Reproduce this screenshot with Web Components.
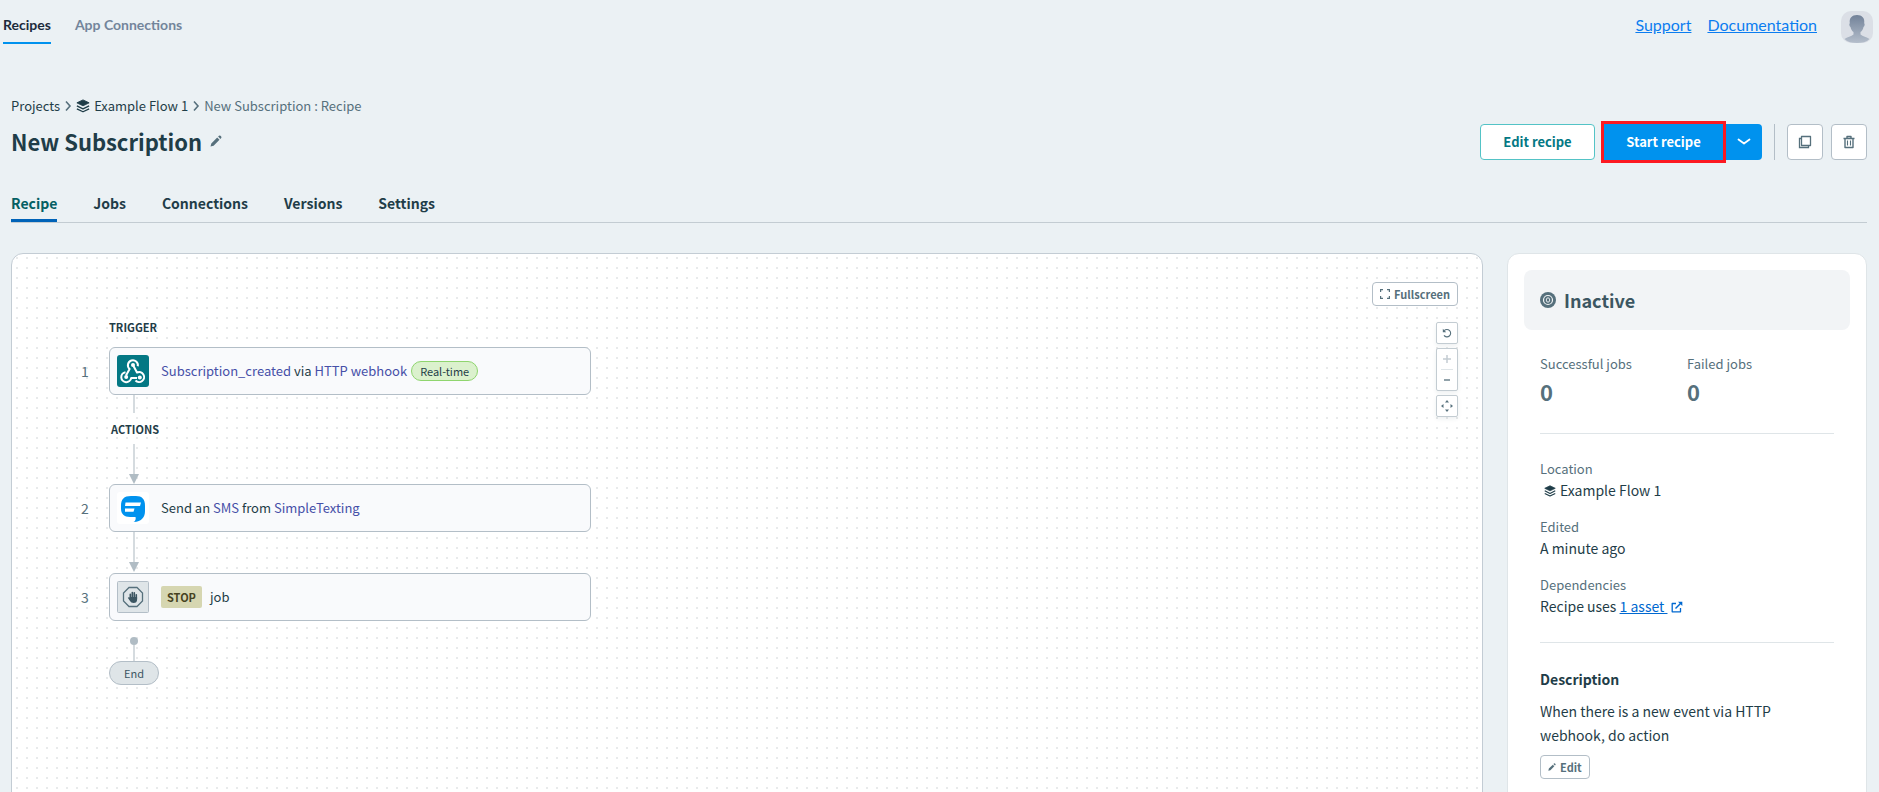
<!DOCTYPE html>
<html lang="en">
<head>
<meta charset="utf-8">
<title>New Subscription</title>
<style>
  html, body { margin: 0; height: 100%; overflow: hidden; }
  body {
    --ink: #1f3d48;
    --muted: #56707c;
    --line: #b3bec7;
    --body-font: "Noto Sans CJK SC", "Open Sans", sans-serif;
    background: #ebf1f4;
    color: var(--ink);
    font: 14px/24px var(--body-font);
  }
</style>
</head>
<body>
<recipe-app></recipe-app>

<script>
(function () {
    'use strict';

    function define(name, html, setup) {
        const template = document.createElement('template');
        template.innerHTML = html;
        customElements.define(name, class extends HTMLElement {
            constructor() {
                super();
                this.attachShadow({ mode: 'open' });
                this.shadowRoot.appendChild(template.content.cloneNode(true));
            }
            connectedCallback() {
                if (setup) setup(this, this.shadowRoot);
            }
        });
    }

    const icons = {
        layers: ['0 0 16 16', '<path d="M8 1 15 4.4 8 7.8 1 4.4Z" fill="currentColor" stroke="currentColor" stroke-linejoin="round"/><path d="m1 7.8 7 3.4 7-3.4M1 11.2l7 3.4 7-3.4" fill="none" stroke="currentColor" stroke-width="1.5" stroke-linejoin="round"/>'],
        chevron: ['0 0 8 12', '<path d="m2 1.500 4 4.500-4 4.500" fill="none" stroke="currentColor" stroke-width="1.600"/>'],
        down: ['0 0 14 8', '<path d="m1.500 1.500 5.500 4 5.500-4" fill="none" stroke="currentColor" stroke-width="1.800" stroke-linecap="round" stroke-linejoin="round"/>'],
        pencil: ['0 0 12 12', '<path d="m.5 11.500.8-3.100L7.200 2.500 9.500 4.800 3.600 10.700ZM8.100 1.600 9 .8Q9.700.2 10.500.8L11.200 1.500Q11.800 2.300 11.200 3L10.400 3.900Z" fill="currentColor"/>'],
        copy: ['0 0 14 14', '<path d="M3.500 1.500h9v9h-9Z" fill="none" stroke="currentColor" stroke-width="1.300" stroke-linejoin="round"/><path d="M3 3.500H1.500v9h9V11" fill="none" stroke="currentColor" stroke-width="1.300"/>'],
        trash: ['0 0 14 14', '<path d="M1.500 3.500h11M5 3V1.500h4V3M3 4v8.500h8V4" fill="none" stroke="currentColor" stroke-width="1.400" stroke-linejoin="round"/><path d="M5.500 5.500v5M8.500 5.500v5" stroke="currentColor" stroke-width="1.100"/>'],
        expand: ['0 0 10 10', '<path d="M.6 3V.6H3M7 .6h2.400V3M9.400 7v2.400H7M3 9.400H.6V7" fill="none" stroke="currentColor" stroke-width="1.200"/>'],
        reset: ['0 0 10 10', '<path d="M2.200 2.700A3.700 3.700 0 1 1 2 7.400" fill="none" stroke="currentColor" stroke-width="1.100"/><path d="M.8.8v3.400h3.400Z" fill="currentColor"/>'],
        plus: ['0 0 10 10', '<path d="M5 1v8M1 5h8" stroke="currentColor" stroke-width="1.500"/>'],
        minus: ['0 0 10 10', '<path d="M2 5h6" stroke="currentColor" stroke-width="1.300"/>'],
        fit: ['0 0 12 12', '<path d="m6 0 2 2.500H4ZM6 12 4 9.500h4ZM0 6l2.500-2v4ZM12 6 9.500 8V4Z" fill="currentColor"/>'],
        external: ['0 0 12 12', '<path d="M5 2.500H1.200v8.300h8.300V7" fill="none" stroke="currentColor" stroke-width="1.300" stroke-linejoin="round"/><path d="m4.500 7.500 5-5" stroke="currentColor" stroke-width="1.400"/><path d="M7 .8h4.300V5Z" fill="currentColor"/>'],
        inactive: ['0 0 16 16', '<circle cx="8" cy="8" r="8" fill="currentColor"/><circle cx="8" cy="8" r="4.500" fill="none" stroke="#f2f4f6" stroke-width="1.200"/><ellipse cx="8" cy="8" rx="1.700" ry="2.200" fill="none" stroke="#f2f4f6" stroke-width=".9"/>'],
        user: ['0 0 32 32', '<defs><linearGradient id="g" x2="0" y2="1"><stop stop-color="#728299"/><stop offset="1" stop-color="#b4becb"/></linearGradient></defs><rect width="32" height="32" rx="10" fill="#dbdfe6"/><path d="M16 4c5 0 8 3 7.200 8.200.8.500.5 3-.7 3.800-.5 2.500-1.500 4-3 5v2.500c2 2 6.500 2.500 9 4.500-3 3-7 4-12.500 4s-9.500-1-12.500-4c2.500-2 7-2.500 9-4.500V21c-1.500-1-2.500-2.500-3-5-1.200-.8-1.500-3.300-.7-3.800C8 7 11 4 16 4Z" fill="url(#g)"/>'],
        webhook: ['0 0 32 32', '<rect width="32" height="32" rx="3" fill="#047884"/><g fill="none" stroke="#fff" stroke-width="2" stroke-linejoin="round"><path d="M20.800 11.200A5 5 0 1 0 12.600 14L9 20.500"/><path d="M8.500 17.200A5 5 0 1 0 14.200 23H20"/><path d="M18.500 25.500A5 5 0 1 0 20 17.500L16.500 11"/></g><g fill="#fff"><circle cx="16" cy="10" r="2"/><circle cx="9.200" cy="22" r="2"/><circle cx="22.800" cy="22.500" r="2"/></g>'],
        sms: ['0 0 32 32', '<rect width="32" height="32" rx="3" fill="#fff"/><path d="M4 14C4 7 7 4 14 4h5c6 0 9 3 9 10v5c0 6-3 10.500-11.500 11 2-1 2.500-3 2-5H13c-6 0-9-3-9-8.500Z" fill="#0092ee"/><path d="M8.500 10.500h15.500l-1 3.500H8ZM8 16.500h9.500l-1 3.200H8Z" fill="#fff"/>'],
        stop: ['0 0 32 32', '<rect x=".5" y=".5" width="31" height="31" rx="1" fill="#dfe5e8" stroke="#b3bec7"/><path d="M12 6.500h8l5.500 5.500v8L20 25.500h-8L6.500 20v-8Z" fill="none" stroke="#56707c" stroke-width="1.300"/><path d="M13.300 18v-4.800M15.300 17v-5.500M17.300 17v-5.200M19.300 18v-4.300" stroke="#3c5662" stroke-width="1.600" stroke-linecap="round"/><path d="M12.500 16h7.600v2.500q0 3.500-3.600 3.500-2.500 0-3.500-2l-2.200-3.200q1-1 1.900.3Z" fill="#3c5662"/>']
    };

    class UiIcon extends HTMLElement {
        static get observedAttributes() {
            return ['name'];
        }

        constructor() {
            super();
            this.attachShadow({ mode: 'open' });
        }

        attributeChangedCallback(name, oldVal, newVal) {
            const [box, body] = icons[newVal];
            this.shadowRoot.innerHTML = `
            <style>
              :host { display: inline-flex; flex: none; width: 12px; height: 12px; }
              svg { display: block; width: 100%; height: 100%; }
            </style>
            <svg viewBox="${box}" aria-hidden="true">${body}</svg>`;
        }
    }
    customElements.define('ui-icon', UiIcon);

    define('ui-button', `
    <style>
      :host { display: inline-flex; }
      button {
        box-sizing: border-box;
        display: flex;
        align-items: center;
        justify-content: center;
        gap: 4px;
        width: 100%;
        height: 36px;
        padding: 0 16px;
        border: 1px solid var(--line);
        border-radius: 4px;
        background: #fff;
        color: var(--muted);
        font: 700 13px/20px var(--body-font);
        white-space: nowrap;
        cursor: pointer;
      }
      :host([kind="outline"]) button { border-color: #53c3c6; color: #047884; }
      :host([kind="primary"]) button { border: 0; border-radius: 0; background: #0092ee; color: #fff; }
      :host([kind="toggle"]) button { border: 0; border-radius: 0 4px 4px 0; background: #0092ee; color: #fff; padding: 0; }
      :host([kind="square"]) button { width: 36px; padding: 0; }
      :host([kind="small"]) button { height: 24px; padding: 0 7px; font-size: 11px; line-height: 16px; }
    </style>
    <button type="button"><slot></slot></button>`, (el, root) => {
        if (el.hasAttribute('label')) root.querySelector('button').setAttribute('aria-label', el.getAttribute('label'));
    });

    define('top-bar', `
    <style>
      :host { display: flex; align-items: flex-start; justify-content: space-between; padding: 11px 6px 0 3px; height: 73px; font: 14px/20px Lato, sans-serif; }
      nav { display: flex; gap: 24px; }
      nav a { padding: 4px 0 7px; color: #73859b; font-weight: 700; text-decoration: none; border-bottom: 2px solid transparent; }
      nav a[aria-current] { color: #1c2b3c; border-color: #0092ee; }
      .links { display: flex; align-items: flex-start; gap: 16px; font-size: 16px; line-height: 28px; }
      .links a { color: #0b7df0; }
      ui-icon { width: 32px; height: 32px; margin-left: 8px; }
    </style>
    <nav>
      <a href="#" aria-current="page">Recipes</a>
      <a href="#">App Connections</a>
    </nav>
    <div class="links">
      <a href="#">Support</a>
      <a href="#">Documentation</a>
      <ui-icon name="user"></ui-icon>
    </div>`);

    define('page-header', `
    <style>
      :host { display: flex; align-items: flex-end; justify-content: space-between; }
      nav { display: flex; align-items: center; font-size: 13px; line-height: 20px; }
      nav a { display: flex; align-items: center; gap: 4px; color: var(--ink); text-decoration: none; }
      nav span { color: var(--muted); }
      nav a ui-icon { width: 14px; height: 14px; }
      .sep { width: 8px; margin: 0 4px; color: var(--muted); }
      .title { display: flex; align-items: center; gap: 8px; padding: 7px 0 4px; }
      h1 { margin: 0; font-size: 22px; line-height: 36px; font-weight: 700; }
      .title button { display: flex; padding: 0; border: 0; background: none; color: var(--muted); cursor: pointer; }
      .actions { display: flex; align-items: center; }
      .edit { width: 115px; }
      .start { width: 119px; margin-left: 6px; border: 3px solid #fc1921; }
      .more { width: 36px; }
      .actions hr { width: 1px; height: 36px; margin: 0 12px; border: 0; background: #b3bec7; }
      .copy { margin-right: 8px; }
      .copy ui-icon, .trash ui-icon { width: 14px; height: 14px; }
      .down { width: 14px; height: 8px; }
    </style>
    <div>
      <nav aria-label="Breadcrumb">
        <a href="#">Projects</a>
        <ui-icon class="sep" name="chevron"></ui-icon>
        <a href="#"><ui-icon name="layers"></ui-icon>Example Flow 1</a>
        <ui-icon class="sep" name="chevron"></ui-icon>
        <span>New Subscription : Recipe</span>
      </nav>
      <div class="title">
        <h1>New Subscription</h1>
        <button type="button" aria-label="Rename"><ui-icon name="pencil"></ui-icon></button>
      </div>
    </div>
    <div class="actions">
      <ui-button class="edit" kind="outline">Edit recipe</ui-button>
      <ui-button class="start" kind="primary">Start recipe</ui-button>
      <ui-button class="more" kind="toggle" label="More start options"><ui-icon class="down" name="down"></ui-icon></ui-button>
      <hr>
      <ui-button class="copy" kind="square" label="Clone"><ui-icon name="copy"></ui-icon></ui-button>
      <ui-button class="trash" kind="square" label="Delete"><ui-icon name="trash"></ui-icon></ui-button>
    </div>`);

    define('tab-bar', `
    <style>
      :host { display: flex; gap: 36px; border-bottom: 1px solid #c3ccd2; }
      ::slotted(a) { padding-bottom: 4px; color: var(--ink); font-weight: 600; text-decoration: none; border-bottom: 3px solid transparent; }
      ::slotted(a[aria-current]) { color: #045f63; border-color: #0063b8; }
    </style>
    <slot></slot>`);

    define('recipe-step', `
    <style>
      :host { display: flex; align-items: center; }
      .index { width: 28px; color: var(--muted); }
      .card {
        box-sizing: border-box;
        display: flex;
        align-items: center;
        gap: 12px;
        flex: 1;
        height: 48px;
        padding: 0 7px;
        border: 1px solid var(--line);
        border-radius: 6px;
        background: #f9fafc;
      }
      .card ui-icon { width: 32px; height: 32px; }
      .text { display: flex; align-items: center; gap: 4px; font-size: 13px; line-height: 20px; white-space: pre; }
      ::slotted(b) { color: #4650a8; font-weight: 400; }
    </style>
    <span class="index"></span>
    <div class="card"><ui-icon></ui-icon><div class="text"><span><slot></slot></span><slot name="badge"></slot></div></div>`, (el, root) => {
        root.querySelector('.index').textContent = el.getAttribute('index');
        root.querySelector('ui-icon').setAttribute('name', el.getAttribute('icon'));
    });

    define('flow-link', `
    <style>
      :host { display: flex; flex-direction: column; align-items: center; width: 50px; height: 40px; margin-left: 28px; }
      .line { flex: 1; width: 2px; background: #d5dbdf; }
      :host([arrow]) .head { border: 5px solid transparent; border-top: 10px solid #b0bcc4; border-bottom: 0; }
      :host([dot]) .dot { width: 8px; height: 8px; border-radius: 50%; background: #b0bcc4; }
    </style>
    <div class="dot"></div><div class="line"></div><div class="head"></div>`);

    define('recipe-canvas', `
    <style>
      :host {
        display: flex;
        justify-content: space-between;
        align-items: flex-start;
        padding: 28px 24px 24px 69px;
        border: 1px solid #c3ccd4;
        border-radius: 12px;
        background: conic-gradient(from 270deg at 2px 2px, #e8eaeb 90deg, transparent 0) 4px 3px / 10px 10px #fff;
      }
      .flow { width: 510px; padding-top: 35px; }
      h2 { width: 50px; margin: 0 0 0 28px; font-size: 11px; line-height: 20px; font-weight: 600; }
      .trigger { margin-bottom: 10px; }
      .actions { padding-left: 2px; margin: 6px 0 5px 28px; }
      .badge { padding: 0 8px; border: 1px solid #8fd56e; border-radius: 10px; background: #dbf1cd; font-size: 11px; line-height: 18px; }
      .stop { display: inline-block; margin-right: 8px; padding: 0 6px; border-radius: 2px; background: #d6d6b1; color: #46421f; font-size: 11px; line-height: 22px; }
      .short { height: 18px; }
      .last { height: 24px; margin-top: 16px; }
      .gap { margin-bottom: 1px; }
      .end { box-sizing: border-box; width: 50px; height: 24px; margin-left: 28px; border: 1px solid var(--line); border-radius: 12px; background: #dfe5e8; color: #3c5662; font-size: 11px; line-height: 22px; text-align: center; }
      .tools { display: flex; flex-direction: column; align-items: flex-end; gap: 4px; }
      .full { margin-bottom: 12px; }
      .full ui-icon { width: 10px; height: 10px; }
      .box { display: flex; flex-direction: column; align-items: center; width: 20px; border: 1px solid #c3ccd2; border-radius: 2px; background: #fff; box-shadow: 0 2px 4px rgba(31, 61, 72, 0.08); }
      .box button { display: flex; align-items: center; justify-content: center; width: 20px; height: 20px; padding: 0; border: 0; background: none; color: var(--muted); }
      .box button:disabled { color: #c3ccd2; }
      .box ui-icon { width: 10px; height: 10px; }
      .box ui-icon[name="fit"] { width: 12px; height: 12px; }
      .box hr { width: 12px; height: 1px; margin: 0; border: 0; background: #dfe5e8; }
    </style>
    <div class="flow">
      <h2 class="trigger">TRIGGER</h2>
      <recipe-step index="1" icon="webhook"><b>Subscription_created</b> via <b>HTTP webhook</b><span class="badge" slot="badge">Real-time</span></recipe-step>
      <flow-link class="short"></flow-link>
      <h2 class="actions">ACTIONS</h2>
      <flow-link arrow></flow-link>
      <recipe-step index="2" icon="sms">Send an <b>SMS</b> from <b>SimpleTexting</b></recipe-step>
      <flow-link class="gap" arrow></flow-link>
      <recipe-step index="3" icon="stop"><strong class="stop">STOP</strong>job</recipe-step>
      <flow-link class="last" dot></flow-link>
      <div class="end">End</div>
    </div>
    <div class="tools">
      <ui-button class="full" kind="small"><ui-icon name="expand"></ui-icon>Fullscreen</ui-button>
      <div class="box"><button type="button" aria-label="Reset"><ui-icon name="reset"></ui-icon></button></div>
      <div class="box">
        <button type="button" aria-label="Zoom in" disabled><ui-icon name="plus"></ui-icon></button>
        <hr>
        <button type="button" aria-label="Zoom out"><ui-icon name="minus"></ui-icon></button>
      </div>
      <div class="box"><button type="button" aria-label="Fit to view"><ui-icon name="fit"></ui-icon></button></div>
    </div>`);

    define('info-item', `
    <style>
      :host { display: block; }
      .label { color: var(--muted); font-size: 13px; line-height: 18px; }
      .value { line-height: 24px; }
      :host([big]) .value { padding-top: 6px; color: var(--muted); font-size: 22px; font-weight: 700; }
    </style>
    <div class="label"></div>
    <div class="value"><slot></slot></div>`, (el, root) => {
        root.querySelector('.label').textContent = el.getAttribute('label');
    });

    define('status-panel', `
    <style>
      :host { display: block; padding: 16px; border: 1px solid #dfe5e8; border-radius: 12px; background: #fff; }
      .status { display: flex; align-items: center; gap: 8px; height: 60px; padding: 0 16px; border-radius: 8px; background: #f2f4f6; color: #3c5662; font-size: 18px; font-weight: 700; }
      .status ui-icon { width: 16px; height: 16px; color: var(--muted); }
      .body { padding: 0 16px; }
      .stats { display: grid; grid-template-columns: 1fr 1fr; padding: 25px 0 30px; }
      .info { display: flex; flex-direction: column; gap: 16px; padding: 26px 0 24px; border: solid #dfe5e8; border-width: 1px 0; }
      .info ui-icon { margin: 0 4px; vertical-align: -1px; }
      .info a, .info .ext { color: #0068d0; }
      h2 { margin: 24px 0 8px; font-size: 14px; line-height: 24px; }
      p { margin: 0 0 6px; }
      .pen { width: 8px; height: 8px; }
    </style>
    <div class="status"><ui-icon name="inactive"></ui-icon>Inactive</div>
    <div class="body">
      <div class="stats">
        <info-item label="Successful jobs" big>0</info-item>
        <info-item label="Failed jobs" big>0</info-item>
      </div>
      <div class="info">
        <info-item label="Location"><ui-icon name="layers"></ui-icon>Example Flow 1</info-item>
        <info-item label="Edited">A minute ago</info-item>
        <info-item label="Dependencies">Recipe uses <a href="#">1 asset&nbsp;</a><ui-icon class="ext" name="external"></ui-icon></info-item>
      </div>
      <h2>Description</h2>
      <p>When there is a new event via HTTP webhook, do action</p>
      <ui-button kind="small"><ui-icon class="pen" name="pencil"></ui-icon>Edit</ui-button>
    </div>`);

    define('recipe-app', `
    <style>
      :host { display: block; }
      main { padding: 12px 12px 0 11px; }
      tab-bar { margin-top: 28px; }
      .columns { display: grid; grid-template-columns: minmax(0, 1fr) 360px; gap: 24px; min-height: calc(100vh - 240px); margin-top: 30px; }
    </style>
    <top-bar></top-bar>
    <main>
      <page-header></page-header>
      <tab-bar>
        <a href="#" aria-current="page">Recipe</a>
        <a href="#">Jobs</a>
        <a href="#">Connections</a>
        <a href="#">Versions</a>
        <a href="#">Settings</a>
      </tab-bar>
      <div class="columns">
        <recipe-canvas></recipe-canvas>
        <status-panel></status-panel>
      </div>
    </main>`);
})();
</script>
</body>
</html>
